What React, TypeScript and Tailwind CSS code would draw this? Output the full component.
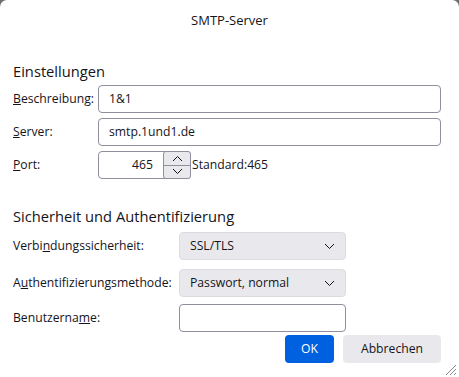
import type { ReactNode } from 'react'

function Label({ children }: { children: ReactNode }) {
  return <span className="flex items-center whitespace-nowrap">{children}</span>
}

function TextInput({ value = '', className = '' }: { value?: string; className?: string }) {
  return (
    <div
      className={`flex h-[28px] items-center rounded-[4px] border border-[#8f8f9d] bg-white px-[10px] ${className}`}
    >
      {value}
    </div>
  )
}

function Chevron({ up = false }: { up?: boolean }) {
  return (
    <svg width="11" height="7" viewBox="0 0 11 7" fill="none" stroke="#15141a" strokeWidth="1">
      {up ? <path d="M1 6 L5.5 1.5 L10 6" /> : <path d="M1 1 L5.5 5.5 L10 1" />}
    </svg>
  )
}

function Select({ value }: { value: string }) {
  return (
    <div className="flex h-[28px] w-[167px] items-center justify-between rounded-[4px] border border-[#dcdce0] bg-[#e9e9ed] pl-[10px] pr-[10px]">
      <span>{value}</span>
      <Chevron />
    </div>
  )
}

export default function App() {
  return (
    <div className="h-[377px] w-[459px] bg-[#6e6e6e] font-['Open_Sans',sans-serif] text-[12.2px] text-[#15141a]">
      <div className="relative flex h-full flex-col rounded-t-[7px] bg-white">
        {/* title */}
        <div className="pt-[11px] text-center text-[13px] leading-[18px]">SMTP-Server</div>

        <div className="px-[13px]">
          {/* Einstellungen */}
          <h2 className="mt-[32px] text-[14.7px] leading-[20px]">Einstellungen</h2>

          <div className="mt-[4px] grid grid-cols-[85px_1fr] gap-y-[5px] pr-[5px]">
            <Label>
              <u>B</u>eschreibung:
            </Label>
            <TextInput value="1&1" />
            <Label>
              <u>S</u>erver:
            </Label>
            <TextInput value="smtp.1und1.de" />
            <Label>
              <u>P</u>ort:
            </Label>
            <div className="flex items-center">
              <div className="flex h-[28px] w-[93px] items-center rounded-[4px] border border-[#8f8f9d] bg-white">
                <span className="flex-1 pr-[10px] text-right">465</span>
                <div className="mr-[-1px] flex h-[28px] w-[28px] flex-col overflow-hidden rounded-[3px] border border-[#8f8f9d] bg-[#e9e9ed]">
                  <div className="flex flex-1 items-center justify-center border-b border-[#8f8f9d]">
                    <Chevron up />
                  </div>
                  <div className="flex flex-1 items-center justify-center">
                    <Chevron />
                  </div>
                </div>
              </div>
              <span className="ml-[1px]">Standard:465</span>
            </div>
          </div>

          {/* Sicherheit */}
          <h2 className="mt-[27px] text-[14.7px] leading-[20px]">Sicherheit und Authentifizierung</h2>

          <div className="mt-[6px] grid grid-cols-[166px_167px] items-center">
            <Label>
              Verbi<u>n</u>dungssicherheit:
            </Label>
            <Select value="SSL/TLS" />
            <div className="mt-[9px]">
              <Label>
                A<u>u</u>thentifizierungsmethode:
              </Label>
            </div>
            <div className="mt-[9px]">
              <Select value="Passwort, normal" />
            </div>
            <div className="mt-[7px]">
              <Label>
                Benutzerna<u>m</u>e:
              </Label>
            </div>
            <TextInput className="mt-[7px]" />
          </div>

          {/* buttons */}
          <div className="mt-[3px] flex justify-end gap-[9px] pr-[5px]">
            <button className="h-[28px] w-[49px] rounded-[4px] bg-[#0061e0] text-white">OK</button>
            <button className="h-[28px] w-[98px] rounded-[4px] bg-[#e9e9ed]">Abbrechen</button>
          </div>
        </div>

        {/* resize grip */}
        <svg className="absolute bottom-[1px] right-[2px]" width="12" height="12" viewBox="0 0 12 12" stroke="#8a8a8a" strokeWidth="1">
          <path d="M11 1 L1 11 M11 5 L5 11 M11 9 L9 11" />
        </svg>
      </div>
    </div>
  )
}
